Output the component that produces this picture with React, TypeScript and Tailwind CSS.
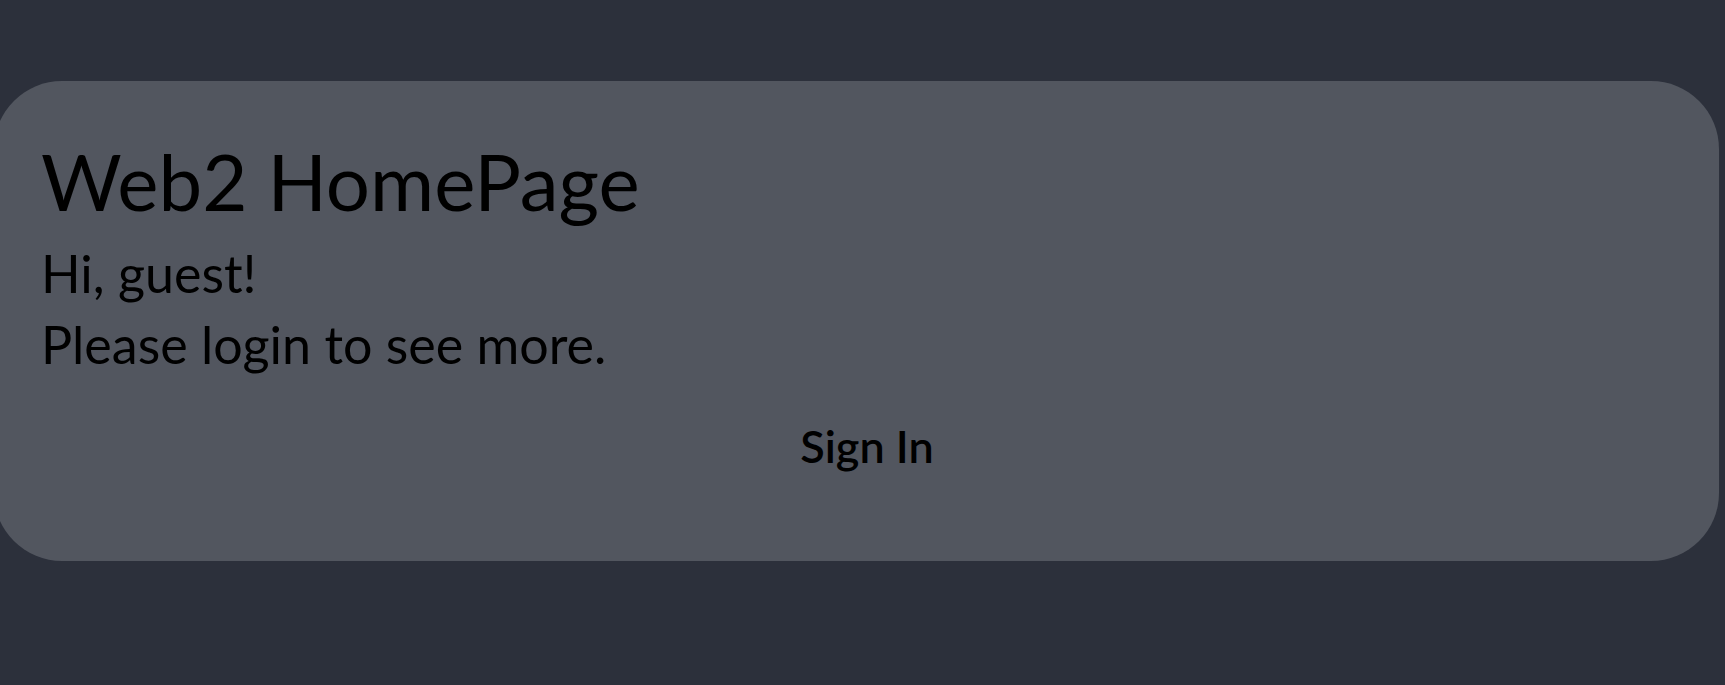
export default function App() {
  return (
    <div
      className="min-h-[685px] w-full overflow-hidden bg-[#2c303b] pt-[81px]"
      style={{ fontFamily: 'Lato, "Open Sans", sans-serif' }}
    >
      <div className="ml-[-6px] w-[1725px] h-[480px] rounded-[68px] bg-[#52565f] pl-[47px] pt-[60px] text-black">
        <h1 className="text-[78px] leading-[80px] font-normal">Web2 HomePage</h1>
        <div className="mt-[17px] text-[52px] leading-[71px]">
          <p>Hi, guest!</p>
          <p>Please login to see more.</p>
        </div>
        <div className="mt-[36px] mr-[26px] flex justify-center">
          <button className="text-[45px] leading-[60px] font-semibold">Sign In</button>
        </div>
      </div>
    </div>
  )
}
